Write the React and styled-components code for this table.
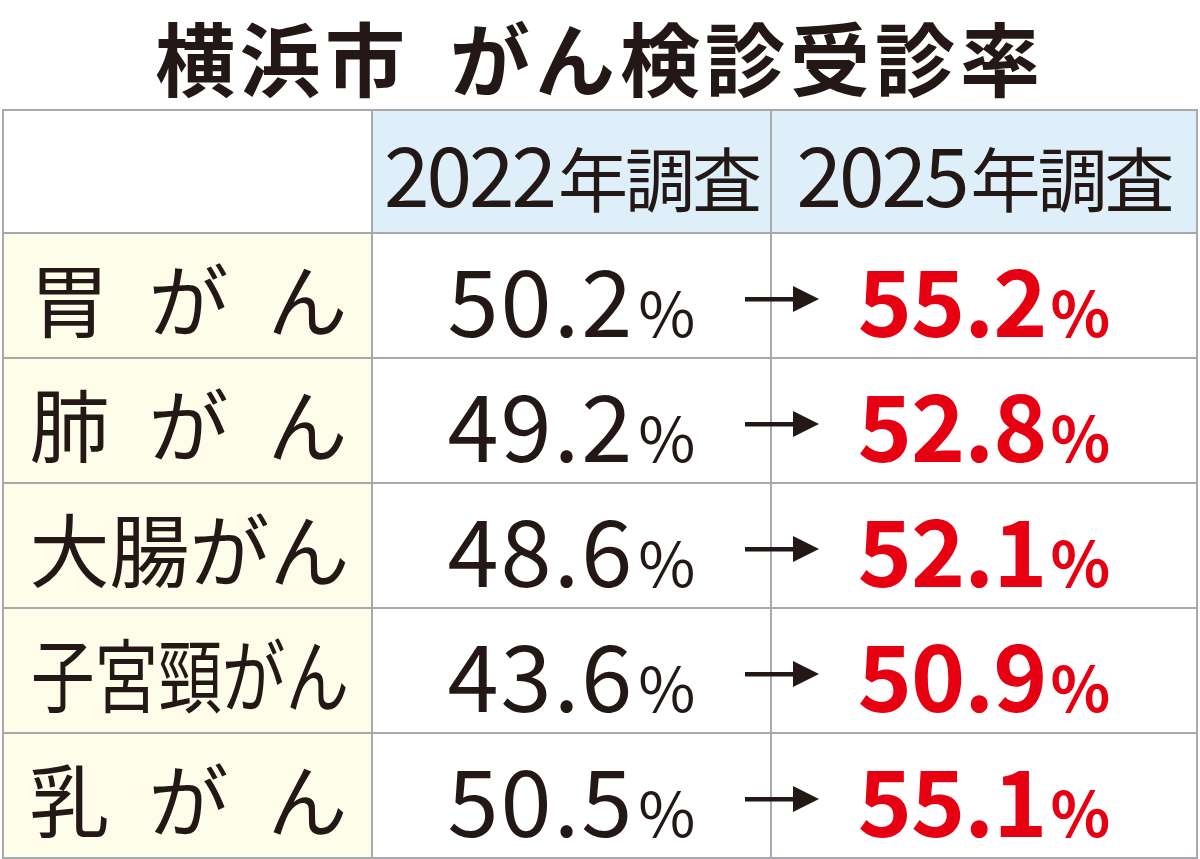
import styled, { createGlobalStyle } from "styled-components";

const GlobalStyle = createGlobalStyle`
  html, body {
    margin: 0;
    padding: 0;
    background: #ffffff;
  }

  body {
    width: 1200px;
    height: 859px;
    overflow: hidden;
    font-family: "Noto Sans CJK JP", "Noto Sans", sans-serif;
    color: #231815;
  }
`;

const Colors = {
  ink: "#231815",
  red: "#e60012",
  line: "#a7a9ac",
  head: "#deeffa",
  label: "#fefde9",
};

const ROWS = [
  { label: "胃がん", before: "50.2", after: "55.2" },
  { label: "肺がん", before: "49.2", after: "52.8" },
  { label: "大腸がん", before: "48.6", after: "52.1" },
  { label: "子宮頸がん", before: "43.6", after: "50.9" },
  { label: "乳がん", before: "50.5", after: "55.1" },
];

/* Title */

const Title = styled.h1`
  margin: 0;
  height: 109px;
  display: flex;
  justify-content: center;
  align-items: center;
  font-size: 80px;
  font-weight: 700;
  letter-spacing: 5px;
  line-height: 1.3;
  color: ${Colors.ink};

  span {
    width: 40px;
  }
`;

/* Table */

const Table = styled.div`
  margin-left: 2px;
  width: 1196px;
  padding: 2px;
  box-sizing: border-box;
  background: ${Colors.line};
  display: flex;
  flex-direction: column;
  gap: 2px;
`;

const Row = styled.div`
  position: relative;
  display: grid;
  grid-template-columns: 367px 397px 424px;
  gap: 2px;
  height: ${({ $head }) => ($head ? "121px" : "123px")};
`;

const Cell = styled.div`
  display: flex;
  justify-content: center;
  align-items: center;
  background: ${({ $tone }) =>
    $tone === "head" ? Colors.head : $tone === "label" ? Colors.label : "#ffffff"};
`;

/* Header */

const HeadText = styled.div`
  display: flex;
  align-items: baseline;
  line-height: 1.2;
  color: ${Colors.ink};
  margin-top: 2px;
`;

const Year = styled.span`
  font-size: 82px;
  font-weight: 400;
  letter-spacing: -3px;
  margin-right: 4px;
`;

const HeadWord = styled.span`
  font-size: 70px;
  font-weight: 400;
  letter-spacing: -3px;
`;

function HeadCell({ year }) {
  return (
    <Cell $tone="head">
      <HeadText>
        <Year>{year}</Year>
        <HeadWord>年調査</HeadWord>
      </HeadText>
    </Cell>
  );
}

/* Label */

const LabelText = styled.div`
  flex: none;
  width: ${({ $squeeze }) => ($squeeze ? "400px" : "318px")};
  margin: ${({ $squeeze }) => ($squeeze ? "0 -41px 0 -37px" : "0 0 0 2px")};
  display: flex;
  justify-content: space-between;
  font-size: 80px;
  font-weight: 400;
  line-height: 1.2;
  transform: ${({ $squeeze }) => ($squeeze ? "scaleX(0.795)" : "none")};
`;

function Label({ text }) {
  return (
    <Cell $tone="label">
      <LabelText $squeeze={text.length > 4}>
        {[...text].map((ch, i) => (
          <span key={i}>{ch}</span>
        ))}
      </LabelText>
    </Cell>
  );
}

/* Value */

const ValueText = styled.div`
  display: flex;
  align-items: baseline;
  line-height: 1.2;
  margin-bottom: -4px;
  color: ${({ $accent }) => ($accent ? Colors.red : Colors.ink)};
  font-weight: ${({ $accent }) => ($accent ? 700 : 400)};
`;

const Num = styled.span`
  font-size: 92px;
  letter-spacing: ${({ $accent }) => ($accent ? "-1px" : "2px")};
`;

const Pct = styled.span`
  font-size: 62px;
  margin-left: 4px;
`;

function Value({ value, accent }) {
  return (
    <Cell>
      <ValueText $accent={accent}>
        <Num $accent={accent}>{value}</Num>
        <Pct>%</Pct>
      </ValueText>
    </Cell>
  );
}

/* Arrow */

const ArrowMark = styled.svg`
  position: absolute;
  left: 741px;
  top: calc(50% + 3px);
  transform: translateY(-50%);
  width: 74px;
  height: 26px;
`;

function Arrow() {
  return (
    <ArrowMark viewBox="0 0 74 26">
      <rect x="0" y="11" width="52" height="4.5" fill={Colors.ink} />
      <polygon points="48,0 74,13 48,26" fill={Colors.ink} />
    </ArrowMark>
  );
}

export default function App() {
  return (
    <>
      <GlobalStyle />
      <Title>
        横浜市<span />がん検診受診率
      </Title>
      <Table>
        <Row $head>
          <Cell />
          <HeadCell year="2022" />
          <HeadCell year="2025" />
        </Row>
        {ROWS.map((row) => (
          <Row key={row.label}>
            <Label text={row.label} />
            <Value value={row.before} />
            <Value value={row.after} accent />
            <Arrow />
          </Row>
        ))}
      </Table>
    </>
  );
}
